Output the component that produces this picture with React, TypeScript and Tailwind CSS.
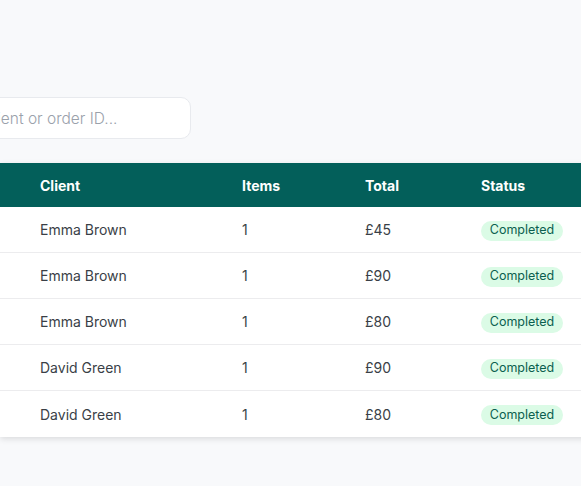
import React from "react";

interface Order {
  client: string;
  items: number;
  total: string;
  status: string;
}

const orders: Order[] = [
  { client: "Emma Brown", items: 1, total: "£45", status: "Completed" },
  { client: "Emma Brown", items: 1, total: "£90", status: "Completed" },
  { client: "Emma Brown", items: 1, total: "£80", status: "Completed" },
  { client: "David Green", items: 1, total: "£90", status: "Completed" },
  { client: "David Green", items: 1, total: "£80", status: "Completed" },
];

export default function App() {
  return (
    <div
      className="h-[486px] w-[581px] overflow-hidden bg-[#f8f9fb]"
      style={{ fontFamily: "Inter, 'Noto Sans', sans-serif" }}
    >
      {/* search bar, left part sits off screen */}
      <div className="flex pt-[97px]">
        <input
          type="text"
          placeholder="Search by client or order ID..."
          className="-ml-[141px] h-[42px] w-[332px] shrink-0 rounded-[10px] border border-[#e8eaee] bg-white pl-[48px] text-[15.5px] font-light text-gray-700 placeholder:text-[#9aa1ab] outline-none"
        />
      </div>

      {/* orders table */}
      <div className="mt-[24px] w-[660px] bg-white shadow-[0_2px_6px_rgba(0,0,0,0.12)]">
        <div className="grid h-[44px] grid-cols-[242px_123px_116px_1fr] items-center bg-[#035f5a] text-[14px] font-bold text-white">
          <div className="pl-10">Client</div>
          <div>Items</div>
          <div>Total</div>
          <div>Status</div>
        </div>
        {orders.map((o, i) => (
          <div
            key={i}
            className={`grid h-[46px] grid-cols-[242px_123px_116px_1fr] items-center text-[14px] text-[#3a3f47] ${
              i < orders.length - 1 ? "border-b border-[#ececee]" : ""
            }`}
          >
            <div className="pl-10">{o.client}</div>
            <div>{o.items}</div>
            <div>{o.total}</div>
            <div>
              <span className="inline-flex h-[20px] w-[82px] items-center justify-center rounded-full bg-[#dbfbe6] text-[12.5px] text-[#0b5f4f]">
                {o.status}
              </span>
            </div>
          </div>
        ))}
      </div>
    </div>
  );
}
